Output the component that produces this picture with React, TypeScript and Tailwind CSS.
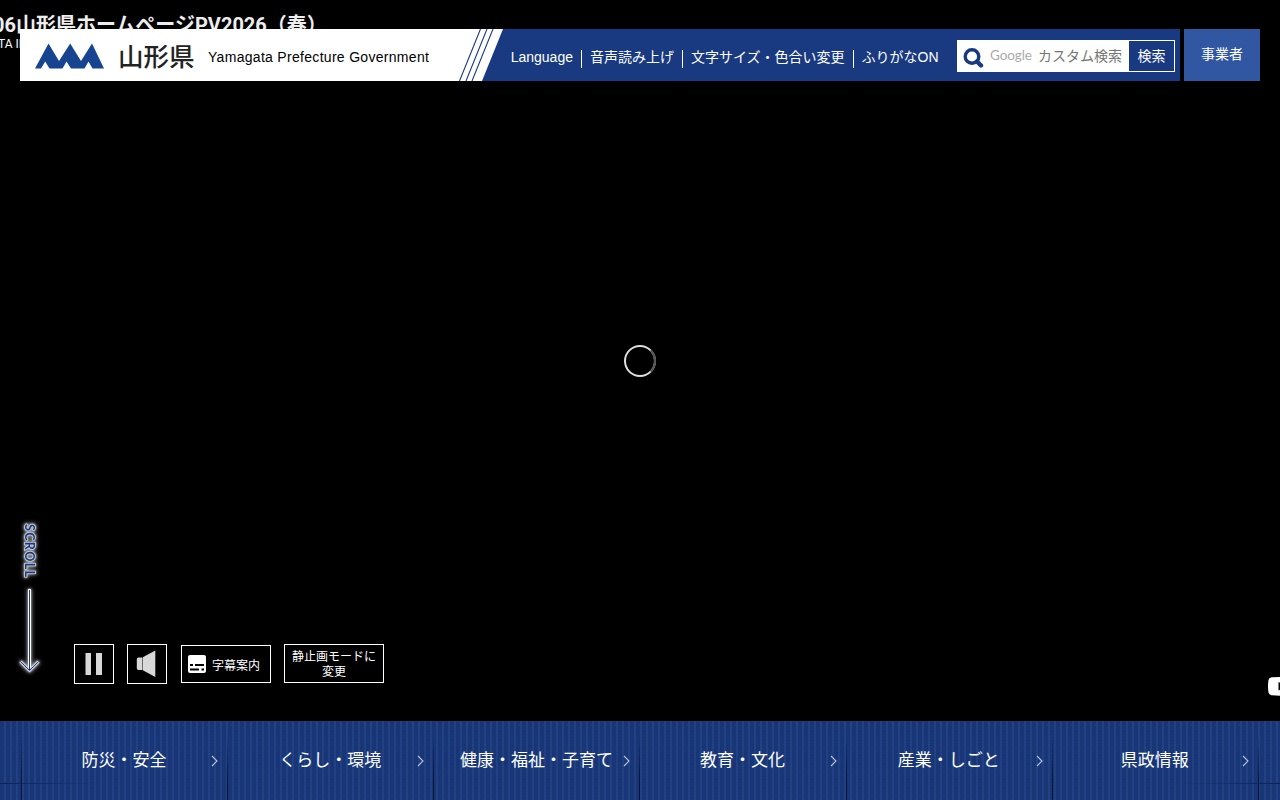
import React from 'react';

// ---------------------------------------------------------------------------
// Data
// ---------------------------------------------------------------------------

const tools = ['Language', '音声読み上げ', '文字サイズ・色合い変更', 'ふりがなON'];

const categories = [
  '防災・安全',
  'くらし・環境',
  '健康・福祉・子育て',
  '教育・文化',
  '産業・しごと',
  '県政情報',
];

// ---------------------------------------------------------------------------
// Header
// ---------------------------------------------------------------------------

function Logo() {
  return (
    <div className="relative flex h-[52px] w-[483px] shrink-0 items-center">
      <svg className="absolute inset-0" width="483" height="52" viewBox="0 0 483 52">
        <path d="M0 0H483L462 52H0Z" fill="#fff" />
        <path d="M460.5 0L439.5 52M467 0L446 52M473 0L452 52" stroke="#193a80" strokeWidth="1.1" />
      </svg>
      <svg className="relative ml-[15px] mt-[1px] shrink-0" width="69" height="26" viewBox="0 0 69 26">
        <path
          d="M0 25.5L13.5 0.5L24 18L35.2 0.5L46 18L57 0.5L69 25.5H57.5L53.5 18.5L49.5 25.5H36L31.5 18.5L27.5 25.5H14.5L10.2 18.5L6 25.5Z"
          fill="#174490"
        />
      </svg>
      <span className="relative ml-[14px] mt-[-1px] w-[77px] whitespace-nowrap text-[25.5px] font-medium leading-none text-[#222] [font-family:'Noto_Sans_CJK_JP',sans-serif]">
        山形県
      </span>
      <span className="relative ml-[13px] mt-[4px] whitespace-nowrap text-[14px] tracking-[0.3px] text-black [font-family:'Liberation_Sans',sans-serif]">
        Yamagata Prefecture Government
      </span>
    </div>
  );
}

function SearchBox() {
  return (
    <div className="mr-[5px] mt-[11px] flex h-8 w-[218px] border border-white bg-white">
      <div className="flex w-[171px] items-center">
        <svg className="ml-[5px] mt-[4px] shrink-0" width="21" height="21" viewBox="0 0 21 21" fill="none">
          <circle cx="9" cy="8.5" r="6.8" stroke="#193a80" strokeWidth="3.4" />
          <path d="M14 13.5L18 17.5" stroke="#193a80" strokeWidth="4.4" strokeLinecap="round" />
        </svg>
        <span className="ml-[6px] w-[42px] text-[13.5px] tracking-[-0.1px] text-[#aaa] [font-family:Lato,sans-serif]">
          Google
        </span>
        <span className="ml-[6px] whitespace-nowrap text-sm text-[#757575]">カスタム検索</span>
      </div>
      <button className="flex h-[30px] w-[45px] items-center justify-center bg-[#193a80] text-sm text-white">
        検索
      </button>
    </div>
  );
}

function Header() {
  return (
    <header className="relative flex gap-1 px-5 pt-[29px] text-sm text-white">
      <div className="flex h-[52px] w-[1160px] bg-[#193a80]">
        <Logo />
        <ul className="flex flex-1 pt-[21px]">
          {tools.map((label, i) => (
            <li
              key={label}
              className={
                i === 0
                  ? 'h-[18px] whitespace-nowrap pl-[7.7px] pr-2 leading-[15px]'
                  : 'h-[18px] whitespace-nowrap border-l border-white px-2 leading-[15px]'
              }
            >
              {label}
            </li>
          ))}
        </ul>
        <SearchBox />
      </div>
      <a className="flex h-[52px] w-[76px] items-center justify-center bg-[#3156a2] pb-[2px] text-sm" href="#">
        事業者
      </a>
    </header>
  );
}

// ---------------------------------------------------------------------------
// Hero video
// ---------------------------------------------------------------------------

function VideoTitle() {
  return (
    <div className="absolute left-0 top-0 whitespace-nowrap text-white [font-family:Roboto,'Noto_Sans_CJK_JP',sans-serif]">
      <p className="ml-[-7px] mt-[11px] text-[20px] font-bold leading-7 text-[#eee]">
        06山形県ホームページPV2026（春）
      </p>
      <p className="ml-[-2px] mt-[-3px] text-xs leading-4">TA INTERNET</p>
    </div>
  );
}

function ScrollCue() {
  return (
    <svg className="absolute left-[10px] top-[512px] overflow-visible" width="40" height="172" viewBox="0 0 40 172">
      <g className="[filter:drop-shadow(0_0_1px_#aaa)_drop-shadow(0_0_2px_#999)]">
        <text
          transform="translate(15 12) rotate(90)"
          fontSize="12.5"
          fontWeight="700"
          fill="#193a80"
          stroke="#ccd0dc"
          strokeWidth="1.6"
          paintOrder="stroke"
          textLength="53"
          fontFamily="Lato, sans-serif"
        >
          SCROLL
        </text>
        <path d="M19.5 77V158" fill="none" stroke="#fff" strokeWidth="3" />
        <path d="M10.5 149.5L19.5 158.5L28.5 149.5" fill="none" stroke="#ccd0dc" strokeWidth="3" />
        <path d="M19.5 78V158M10.5 149.5L19.5 158.5L28.5 149.5" fill="none" stroke="#193a80" strokeWidth="1" />
      </g>
    </svg>
  );
}

function Controls() {
  return (
    <div className="absolute left-[74px] top-[644px] flex items-start text-xs text-white">
      <button className="flex h-10 w-10 items-center border border-white">
        <svg className="ml-[10px]" width="18" height="22" viewBox="0 0 18 22" fill="#d8d8d8">
          <path d="M0.5 0H6V22H0.5ZM11 0H17V22H11Z" />
        </svg>
      </button>
      <button className="ml-[13px] flex h-10 w-10 items-center border border-white">
        <svg className="ml-[8px]" width="20" height="28" viewBox="0 0 20 28" fill="#d8d8d8">
          <path d="M2.5 7.5H6.3V20H2.5Q0.8 20 0.8 18.3V9.2Q0.8 7.5 2.5 7.5ZM6.8 7.3L19.3 0.5V27L6.8 20.2Z" />
        </svg>
      </button>
      <button className="ml-[14px] mt-px flex h-[38px] w-[90px] items-center border border-white">
        <svg className="ml-[6px]" width="18" height="18" viewBox="0 0 18 18">
          <rect width="18" height="18" rx="2" fill="#fff" />
          <path d="M2 10H5M7 10H16M2 14.5H11M13.5 14.5H16" stroke="#000" strokeWidth="2" />
        </svg>
        <span className="ml-[6px] mt-[3px]">字幕案内</span>
      </button>
      <button className="ml-[13px] h-[39px] w-[100px] border border-white pt-[2px] leading-[15px]">
        静止画モードに
        <br />
        変更
      </button>
    </div>
  );
}

function Spinner() {
  return (
    <svg className="absolute left-[624px] top-[345px]" width="32" height="32" viewBox="0 0 32 32" fill="none">
      <circle cx="16" cy="16" r="15" stroke="#ddd" strokeWidth="2" />
      <path d="M26.6 5.4A15 15 0 0 1 26.6 26.6" stroke="#555" strokeWidth="2.2" />
    </svg>
  );
}

function YoutubeMark() {
  return (
    <svg className="absolute left-[1268px] top-[677px]" width="12" height="19" viewBox="0 0 12 19">
      <path d="M12 0L4 0.3Q1 0.5 0.5 3Q-0.5 9.5 0.5 15.5Q1 18 4 18.3L12 18.7Z" fill="#fff" />
      <path d="M10.5 5V13.5L12 12.7V5.8Z" fill="#000" />
    </svg>
  );
}

// ---------------------------------------------------------------------------
// Category navigation
// ---------------------------------------------------------------------------

function CategoryNav() {
  return (
    <nav className="relative h-[79px] bg-[#1a387b] bg-[repeating-linear-gradient(0deg,#1a387b00_0_2px,#1a387b55_2px_3px),repeating-linear-gradient(90deg,#183576_0_4px,#224284_4px_6px)] pl-[21px] text-white">
      <div className="absolute inset-x-0 top-[62px] h-px bg-[linear-gradient(90deg,#0d2457_0,#0d245700_100px,#0d245700_1180px,#0d2457_1280px)]" />
      <ul className="flex h-full">
        {categories.map((name) => (
          <li
            key={name}
            className="relative flex w-[206.17px] shrink-0 justify-center bg-[linear-gradient(180deg,#08143300_15px,#081433_60px)] bg-[length:1px_100%] bg-no-repeat pt-[27px] text-[17px] leading-[26px]"
          >
            <span className="whitespace-nowrap">{name}</span>
            <svg className="absolute right-[9px] top-[34px]" width="7" height="12" viewBox="0 0 7 12" fill="none">
              <path d="M1 1L6 6L1 11" stroke="#b7c4df" strokeWidth="1.1" />
            </svg>
          </li>
        ))}
        <li className="w-px shrink-0 bg-[linear-gradient(180deg,#08143300_15px,#081433_60px)]" />
      </ul>
    </nav>
  );
}

export default function App() {
  return (
    <div className="h-[800px] w-[1280px] overflow-hidden bg-black [font-family:'Liberation_Sans','Noto_Sans_CJK_JP',sans-serif]">
      <section className="relative h-[721px] overflow-hidden">
        <VideoTitle />
        <Header />
        <Spinner />
        <ScrollCue />
        <Controls />
        <YoutubeMark />
      </section>
      <CategoryNav />
    </div>
  );
}
